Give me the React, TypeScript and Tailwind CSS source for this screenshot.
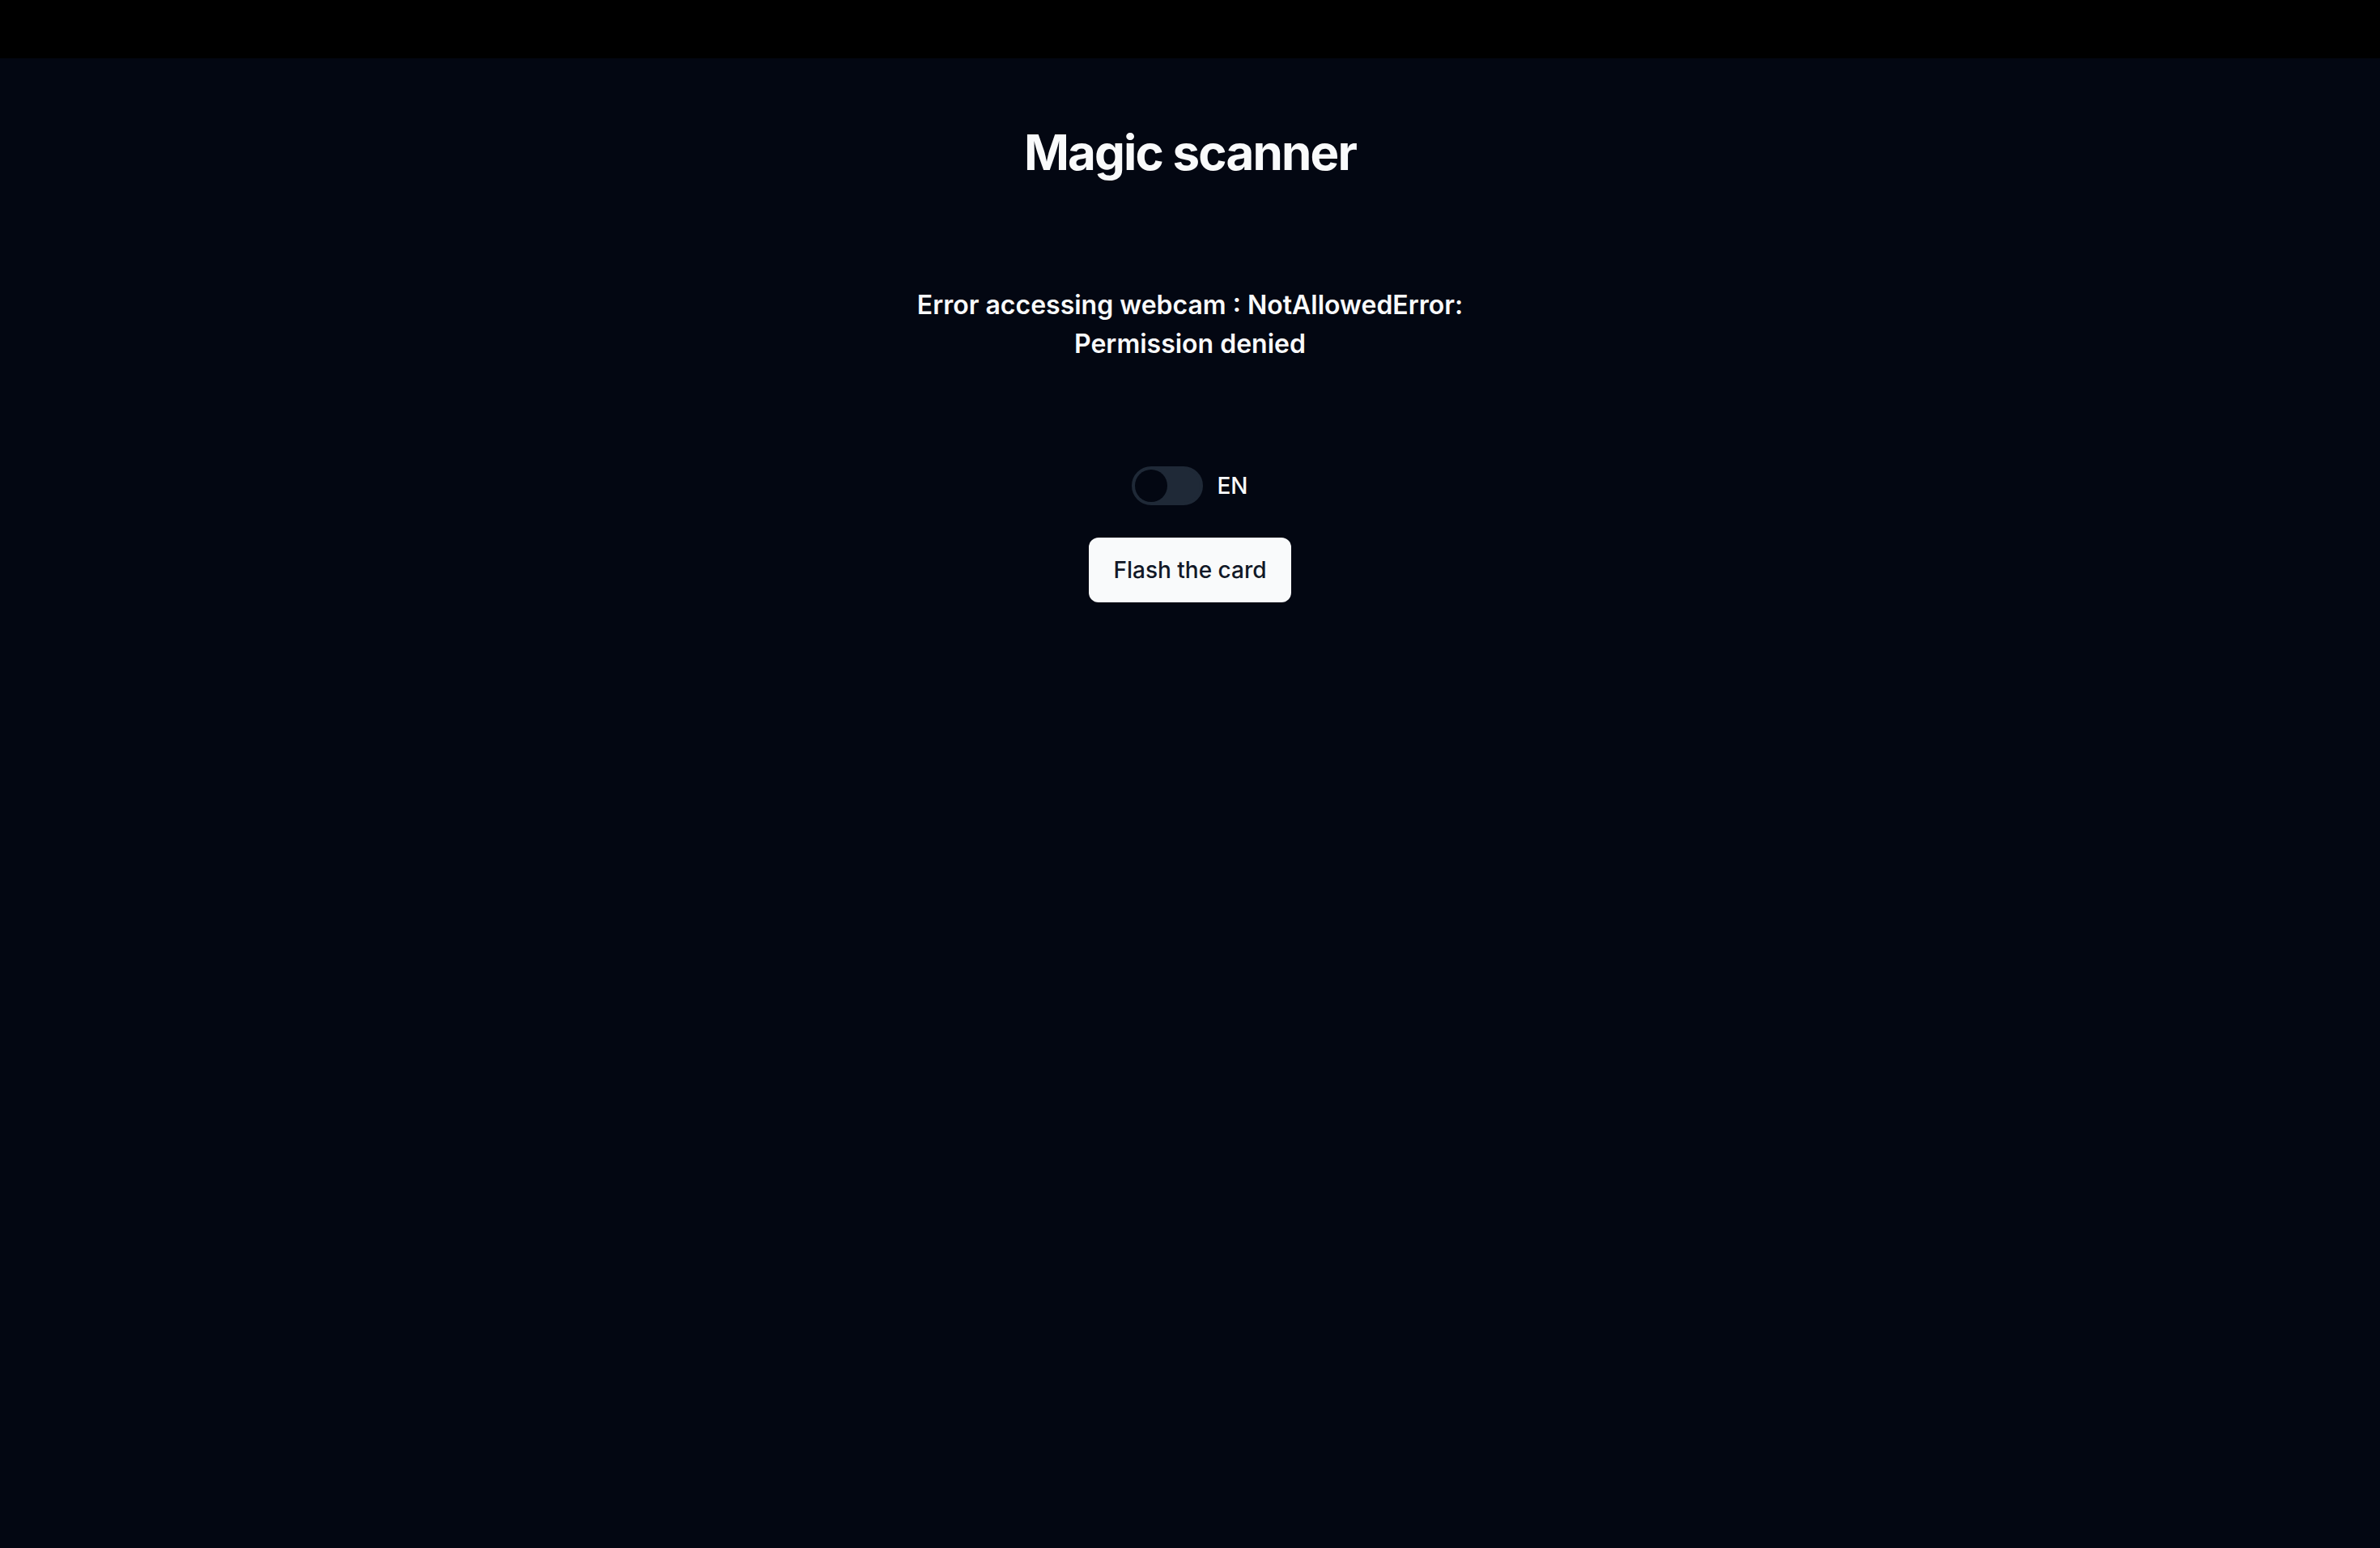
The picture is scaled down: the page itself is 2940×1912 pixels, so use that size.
import React from 'react';

export default function App() {
  const [lang, setLang] = React.useState<'EN' | 'FR'>('EN');
  const on = lang === 'FR';

  return (
    <div className="min-h-screen bg-[#030712] text-[#f9fafb] font-['Inter','Liberation_Sans',sans-serif]">
      <div className="h-[72px] bg-black" />
      <main className="flex flex-col items-center pt-[80px]">
        <h1 className="text-[60px] leading-[72px] font-bold tracking-[-0.03em]">Magic scanner</h1>

        <p className="mt-[129px] max-w-[768px] text-center text-[32px] leading-[48px] font-semibold">
          Error accessing webcam : NotAllowedError: Permission denied
        </p>

        <div className="mt-[127px] flex items-center gap-[17px]">
          <button
            onClick={() => setLang(on ? 'EN' : 'FR')}
            className="flex h-[48px] w-[88px] items-center rounded-full border-[4px] border-[#1f2937] bg-[#1f2937] p-0"
          >
            <span
              className={`block h-[40px] w-[40px] rounded-full bg-[#030712] transition-transform ${
                on ? 'translate-x-[40px]' : 'translate-x-0'
              }`}
            />
          </button>
          <span className="text-[28px] leading-[40px] font-medium">{lang}</span>
        </div>

        <button className="mt-[40px] h-[80px] rounded-[12px] bg-[#f9fafb] px-[30px] text-[28px] font-medium text-[#111827]">
          Flash the card
        </button>
      </main>
    </div>
  );
}
